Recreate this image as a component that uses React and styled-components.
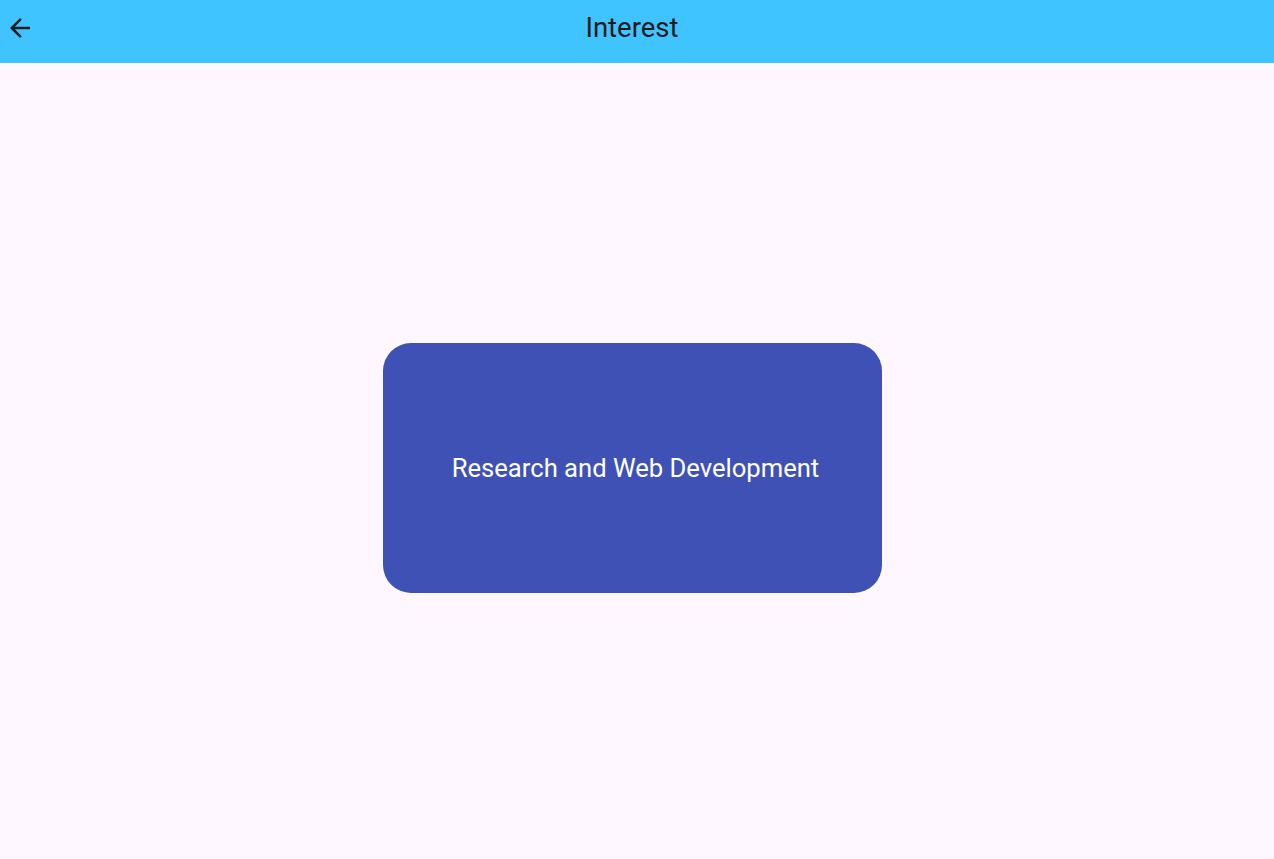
import React from 'react';
import styled, { createGlobalStyle } from 'styled-components';
import { MdArrowBack } from 'react-icons/md';

const GlobalStyle = createGlobalStyle`
  html, body {
    margin: 0;
    padding: 0;
    background: #fef7ff;
    font-family: Roboto, "Noto Sans", sans-serif;
  }
`;

const Page = styled.div` /* 전체 화면 */
  width: 1274px;
  height: 859px;
  display: flex;
  flex-direction: column;
  background: #fef7ff;
`;

const AppBar = styled.header` /* 상단 바 */
  height: 63px;
  flex-shrink: 0;
  background: #40c4ff;
  display: grid;
  grid-template-columns: 40px 1fr 40px;
  align-items: center;
`;

const BackButton = styled.button` /* 뒤로가기 */
  border: none;
  background: transparent;
  padding: 0 0 0 5px;
  margin-top: -7px;
  height: 30px;
  display: flex;
  align-items: center;
  color: #1d1b20;
  cursor: pointer;
`;

const Title = styled.h1` /* 타이틀 */
  margin: 0 0 8px;
  text-align: center;
  font-size: 27.5px;
  line-height: 32px;
  font-weight: 400;
  color: #1d1b20;
  padding-right: 10px;
`;

const Body = styled.main`
  flex: 1;
  display: flex;
  justify-content: center;
  align-items: flex-start;
  padding: 280px 392px 0 383px;
`;

const Card = styled.div` /* 관심 카드 */
  width: 500px;
  height: 250px;
  border-radius: 28px;
  background: #3f51b5;
  display: flex;
  align-items: center;
  justify-content: center;
  color: #fff;
  font-size: 25.6px;
  padding-left: 6px;
  box-sizing: border-box;
`;

export default function App() {
  return (
    <Page>
      <GlobalStyle />
      <AppBar>
        <BackButton aria-label="back">
          <MdArrowBack size={30} />
        </BackButton>
        <Title>Interest</Title>
        <span />
      </AppBar>
      <Body>
        <Card>Research and Web Development</Card>
      </Body>
    </Page>
  );
}
